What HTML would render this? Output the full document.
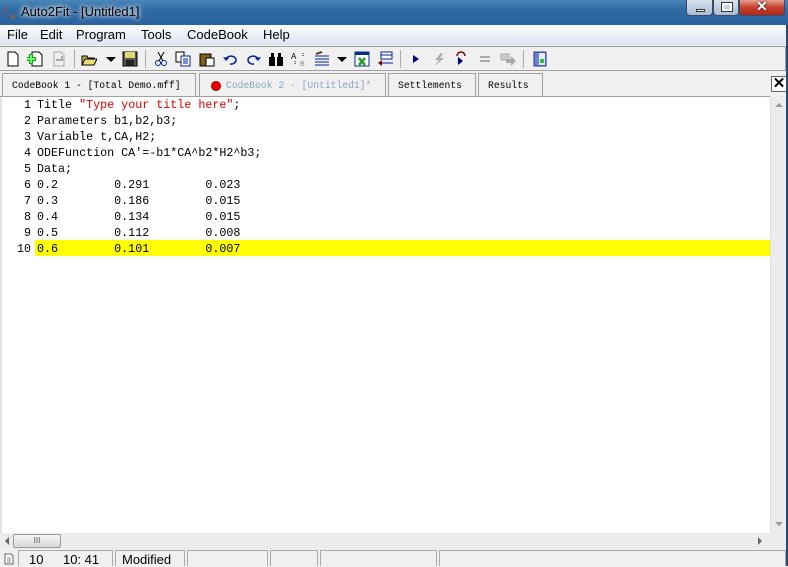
<!DOCTYPE html>
<html><head><meta charset="utf-8"><style>
*{margin:0;padding:0;box-sizing:border-box}
body{width:788px;height:566px;overflow:hidden;background:#f0f0f0;font-family:"Liberation Sans",sans-serif;position:relative}
.abs{position:absolute}
#title{left:0;top:0;width:788px;height:25px;background:linear-gradient(180deg,#4a86b8 0%,#2f6aa3 40%,#2a63a0 100%)}
#title span{position:absolute;left:21px;top:4px;font-size:13px;color:#000;text-shadow:0 0 6px #fff,0 0 4px #fff}
.wb{top:0;height:16px;border:1px solid #3b4a66;border-top:none;border-radius:0 0 4px 4px}
#menu{left:0;top:25px;width:788px;height:20px;background:linear-gradient(#fbfcfd,#dde4f0);font-size:13px;border-right:2px solid #2b4a72}
#menu span{position:absolute;top:2px}
#tb{left:0;top:46px;width:786px;height:25px;background:#f0f0f0;border:1px solid #a0a0a0;border-left:none}
.ic{position:absolute;top:4px;width:16px;height:16px}
.tab{top:73px;height:23px;border:1px solid #a0a0a0;border-bottom:none;background:#f0f0f0;font-family:"Liberation Mono",monospace;font-size:9.7px;padding:6px 0 0 9px;white-space:nowrap}
#ed{left:0;top:96px;width:770px;height:437px;background:#fff;border-top:1px solid #a0a0a0}
#gut{left:0;top:97px;width:34px;height:436px;background:#fff;border-left:2px solid #e4e4e4}
.ln{position:absolute;left:0;width:29px;text-align:right;font-family:"Liberation Mono",monospace;font-size:11.7px;line-height:16px;color:#000}
.tx{position:absolute;left:37px;font-family:"Liberation Mono",monospace;font-size:11.7px;line-height:16px;white-space:pre;color:#000}
</style></head><body>
<div id="title" class="abs">
<svg class="abs" style="left:3px;top:4px" width="16" height="16"><text x="0" y="9" font-size="9" fill="#e04020" font-family="Liberation Serif">λ</text><text x="7" y="15" font-size="9" fill="#e06010" font-family="Liberation Serif">φ</text></svg>
<span>Auto2Fit - [Untitled1]</span>
<div class="abs wb" style="left:686px;width:27px;background:linear-gradient(#d8e2ee,#a9bcd4)"><div style="position:absolute;left:9px;top:9px;width:9px;height:3px;background:#fff;border:1px solid #333"></div></div>
<div class="abs wb" style="left:713px;width:26px;background:linear-gradient(#d8e2ee,#a9bcd4)"><div style="position:absolute;left:8px;top:3px;width:10px;height:8px;border:2px solid #fff;outline:1px solid #333"></div></div>
<div class="abs wb" style="left:739px;width:46px;background:linear-gradient(#e8a090,#c8402c 50%,#b02818)"><div style="position:absolute;left:16px;top:-2px;color:#fff;font-weight:bold;font-size:14px;text-shadow:0 0 2px #000">✕</div></div>
</div>
<div id="menu" class="abs">
<span style="left:7px">File</span><span style="left:40px">Edit</span><span style="left:76px">Program</span><span style="left:141px">Tools</span><span style="left:187px">CodeBook</span><span style="left:263px">Help</span>
</div>
<div id="tb" class="abs">
<svg class="ic" style="left:5px" viewBox="0 0 16 16"><path d="M3 1h7l3 3v11H3z" fill="#fff" stroke="#000"/></svg>
<svg class="ic" style="left:27px" viewBox="0 0 16 16"><path d="M5 1h7l3 3v11H5z" fill="#fff" stroke="#000"/><path d="M4 3v10M-1 8h10" stroke="#1a9a1a" stroke-width="4"/><path d="M4 4v8M0 8h8" stroke="#6f6" stroke-width="2"/></svg>
<svg class="ic" style="left:51px" viewBox="0 0 16 16"><path d="M3 1h7l3 3v11H3z" fill="#eee" stroke="#aaa"/><path d="M5 9h6V5" stroke="#aaa" stroke-width="2" fill="none"/></svg>
<div class="abs" style="left:74px;top:3px;width:1px;height:18px;background:#aaa"></div>
<svg class="ic" style="left:81px" viewBox="0 0 16 16"><path d="M1 5h5l1 2h6v7H1z" fill="#c8b440" stroke="#000"/><path d="M1 14l3-6h12l-3 6z" fill="#f0e070" stroke="#000"/></svg>
<svg class="ic" style="left:104px" viewBox="0 0 16 16"><path d="M2 6h10l-5 5z" fill="#000"/></svg>
<svg class="ic" style="left:122px" viewBox="0 0 16 16"><rect x="1" y="1" width="14" height="14" fill="#555" stroke="#000"/><rect x="3" y="1" width="10" height="6" fill="#e0d870"/><rect x="4" y="9" width="8" height="6" fill="#222"/></svg>
<div class="abs" style="left:145px;top:3px;width:1px;height:18px;background:#aaa"></div>
<svg class="ic" style="left:153px" viewBox="0 0 16 16"><path d="M5 1l5 9M11 1L6 10" stroke="#000"/><circle cx="5" cy="12" r="2.5" fill="none" stroke="#0020a0"/><circle cx="11" cy="12" r="2.5" fill="none" stroke="#0020a0"/></svg>
<svg class="ic" style="left:175px" viewBox="0 0 16 16"><rect x="1" y="1" width="8" height="10" fill="#fff" stroke="#000"/><rect x="6" y="5" width="9" height="10" fill="#fff" stroke="#0020a0"/><path d="M8 8h5M8 10h5M8 12h5" stroke="#0020a0"/></svg>
<svg class="ic" style="left:199px" viewBox="0 0 16 16"><rect x="1" y="3" width="11" height="12" fill="#806020" stroke="#000"/><rect x="7" y="7" width="8" height="8" fill="#fff" stroke="#000"/></svg>
<svg class="ic" style="left:222px" viewBox="0 0 16 16"><path d="M4 9a5 4 0 1 1 4 4" fill="none" stroke="#0020a0" stroke-width="1.5"/><path d="M1 6l3 4 3-3z" fill="#0020a0"/></svg>
<svg class="ic" style="left:246px" viewBox="0 0 16 16"><path d="M12 9a5 4 0 1 0-4 4" fill="none" stroke="#0020a0" stroke-width="1.5"/><path d="M15 6l-3 4-3-3z" fill="#0020a0"/></svg>
<svg class="ic" style="left:268px" viewBox="0 0 16 16"><rect x="1" y="6" width="6" height="9" fill="#000"/><rect x="9" y="6" width="6" height="9" fill="#000"/><rect x="3" y="2" width="3" height="5" fill="#000"/><rect x="10" y="2" width="3" height="5" fill="#000"/></svg>
<svg class="ic" style="left:291px" viewBox="0 0 16 16"><text x="0" y="8" font-size="8">A</text><text x="9" y="15" font-size="7" fill="#888">B</text><path d="M4 10v4M12 2v4" stroke="#000" stroke-dasharray="1 1"/></svg>
<svg class="ic" style="left:314px" viewBox="0 0 16 16"><path d="M1 5h14M1 8h14M1 11h14M1 14h14" stroke="#0020a0"/><path d="M2 3l6-2" stroke="#704010" stroke-width="2"/></svg>
<svg class="ic" style="left:335px" viewBox="0 0 16 16"><path d="M2 6h10l-5 5z" fill="#000"/></svg>
<svg class="ic" style="left:354px" viewBox="0 0 16 16"><rect x="1" y="1" width="14" height="14" fill="#fff" stroke="#003080"/><rect x="1" y="1" width="14" height="3" fill="#003080"/><path d="M5 7l6 7M11 7l-6 7" stroke="#2a9a2a" stroke-width="2.5"/></svg>
<svg class="ic" style="left:377px" viewBox="0 0 16 16"><rect x="4" y="1" width="11" height="7" fill="#fff" stroke="#0020a0"/><path d="M4 4h11M4 12h12" stroke="#0020a0"/><path d="M1 12l4-3v6z" fill="#800000"/></svg>
<div class="abs" style="left:400px;top:3px;width:1px;height:18px;background:#aaa"></div>
<svg class="ic" style="left:409px" viewBox="0 0 16 16"><path d="M4 4l6 4-6 4z" fill="#000080"/></svg>
<svg class="ic" style="left:430px" viewBox="0 0 16 16"><path d="M11 2L5 9h4l-4 6 9-8h-4l3-5z" fill="#aaa"/></svg>
<svg class="ic" style="left:453px" viewBox="0 0 16 16"><path d="M4 5a4 4 0 0 1 8 0" fill="none" stroke="#800000" stroke-width="1.5"/><path d="M5 6l5 4-5 4z" fill="#000080"/></svg>
<svg class="ic" style="left:477px" viewBox="0 0 16 16"><path d="M3 6h10M3 10h10" stroke="#aaa" stroke-width="2"/></svg>
<svg class="ic" style="left:500px" viewBox="0 0 16 16"><rect x="1" y="3" width="8" height="6" fill="#ccc" stroke="#aaa"/><path d="M6 8h5V5l5 5-5 5v-3H6z" fill="#aaa"/></svg>
<div class="abs" style="left:523px;top:3px;width:1px;height:18px;background:#aaa"></div>
<svg class="ic" style="left:532px" viewBox="0 0 16 16"><rect x="2" y="1" width="12" height="14" fill="#6a80d0" stroke="#2a3a8a"/><rect x="7" y="2" width="6" height="12" fill="#e8e8f8"/><rect x="8" y="8" width="4" height="4" fill="#30c030"/></svg>
</div>
<div class="abs tab" style="left:2px;width:194px">CodeBook 1 - [Total Demo.mff]</div>
<div class="abs tab" style="left:199px;width:187px;color:#8aa4c8;padding-left:26px"><span style="position:absolute;left:11px;top:7px;width:10px;height:10px;border-radius:50%;background:#e00;border:1px solid #900"></span>CodeBook 2 - [Untitled1]*</div>
<div class="abs tab" style="left:388px;width:88px">Settlements</div>
<div class="abs tab" style="left:478px;width:65px">Results</div>
<div class="abs" style="left:771px;top:76px;width:16px;height:16px;border:1px solid #666;background:#fff;font-size:15px;font-weight:bold;line-height:14px;text-align:center">✕</div>
<div id="ed" class="abs"></div>
<div id="gut" class="abs">
<div class="ln" style="top:0px">1</div><div class="ln" style="top:16px">2</div><div class="ln" style="top:32px">3</div><div class="ln" style="top:48px">4</div><div class="ln" style="top:64px">5</div><div class="ln" style="top:80px">6</div><div class="ln" style="top:96px">7</div><div class="ln" style="top:112px">8</div><div class="ln" style="top:128px">9</div><div class="ln" style="top:144px">10</div>
</div>
<div class="abs" style="left:35px;top:240px;width:735px;height:16px;background:#ffff00"></div>
<div class="abs" style="left:0;top:96px;width:770px">
<div class="tx" style="top:1px">Title <span style="color:#e00000">"Type your title here"</span>;</div>
<div class="tx" style="top:17px">Parameters b1,b2,b3;</div>
<div class="tx" style="top:33px">Variable t,CA,H2;</div>
<div class="tx" style="top:49px">ODEFunction CA'=-b1*CA^b2*H2^b3;</div>
<div class="tx" style="top:65px">Data;</div>
<div class="tx" style="top:81px">0.2        0.291        0.023</div>
<div class="tx" style="top:97px">0.3        0.186        0.015</div>
<div class="tx" style="top:113px">0.4        0.134        0.015</div>
<div class="tx" style="top:129px">0.5        0.112        0.008</div>
<div class="tx" style="top:145px">0.6        0.101        0.007</div>
</div>
<div class="abs" style="left:770px;top:96px;width:16px;height:437px;background:#ececec;border-left:1px solid #e0e0e0"><div style="position:absolute;left:4px;top:7px;border:4px solid transparent;border-bottom-color:#999;border-top:none;width:0"></div><div style="position:absolute;left:4px;bottom:7px;border:4px solid transparent;border-top-color:#999;border-bottom:none;width:0"></div></div>
<div class="abs" style="left:0;top:533px;width:786px;height:16px;background:#ececec">
<div style="position:absolute;left:5px;top:4px;border:4px solid transparent;border-right-color:#666;border-left:none"></div>
<div style="position:absolute;left:13px;top:1px;width:48px;height:14px;border:1px solid #999;border-radius:2px;background:linear-gradient(#f6f6f6,#d8d8d8);font-size:8px;text-align:center;line-height:12px;color:#555">III</div>
<div style="position:absolute;left:758px;top:4px;border:4px solid transparent;border-left-color:#666;border-right:none"></div>
</div>
<div class="abs" style="left:786px;top:25px;width:2px;height:541px;background:#2b4a72"></div>
<div class="abs" style="left:0;top:550px;width:786px;height:16px;background:#f0f0f0;font-size:13px">
<svg style="position:absolute;left:4px;top:3px" width="10" height="12"><path d="M1 1h6l2 2v8H1z" fill="#fff" stroke="#666"/><path d="M3 5h4M3 7h4M3 9h4" stroke="#888"/></svg>
<div style="position:absolute;left:18px;top:0;width:95px;height:16px;border:1px solid #aaa;border-bottom:none"><span style="position:absolute;left:10px;top:1px">10</span><span style="position:absolute;left:44px;top:1px">10: 41</span></div>
<div style="position:absolute;left:115px;top:0;width:70px;height:16px;border:1px solid #aaa;border-bottom:none"><span style="position:absolute;left:6px;top:1px">Modified</span></div>
<div style="position:absolute;left:187px;top:0;width:81px;height:16px;border:1px solid #aaa;border-bottom:none"></div>
<div style="position:absolute;left:270px;top:0;width:48px;height:16px;border:1px solid #aaa;border-bottom:none"></div>
<div style="position:absolute;left:320px;top:0;width:117px;height:16px;border:1px solid #aaa;border-bottom:none"></div>
<div style="position:absolute;left:439px;top:0;width:347px;height:16px;border:1px solid #aaa;border-bottom:none"></div>
</div>
</body></html>
